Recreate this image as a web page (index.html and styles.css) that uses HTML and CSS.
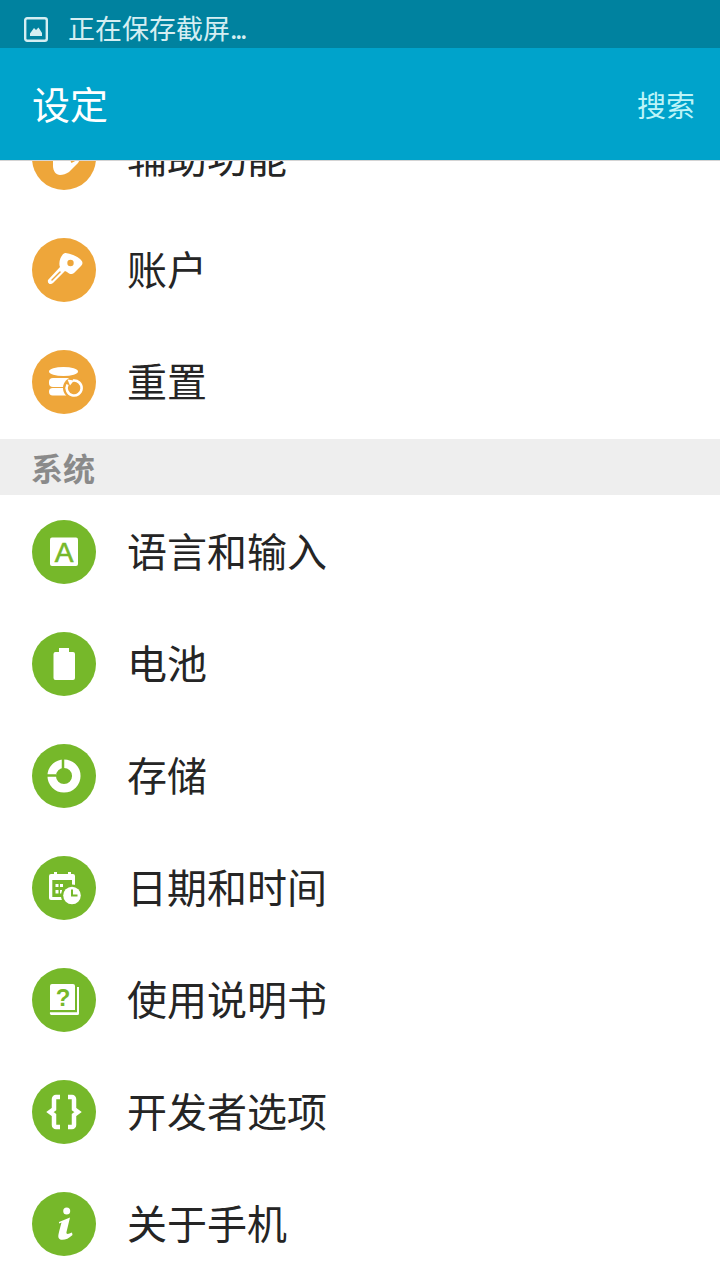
FILE: index.html
```html
<!DOCTYPE html>
<html lang="zh-CN">
<head>
    <meta charset="UTF-8">
    <meta name="viewport" content="width=device-width, initial-scale=1.0">
    <title>设定</title>
    <link rel="stylesheet" href="styles.css">
</head>
<body>
    <div class="status-bar">
        <svg class="status-icon" viewBox="0 0 24 25" width="24" height="25">
            <rect x="1.2" y="1.2" width="21.6" height="22.6" rx="2" fill="none" stroke="#d5eef2" stroke-width="2.4"/>
            <path d="M6 19v-2.500l4-5.500 2 2 2.500-2.500 3.500 5.500V19z" fill="#d5eef2"/>
        </svg>
        <span class="status-text">正在保存截屏<span class="dots">...</span></span>
    </div>
    <header class="action-bar">
        <h1>设定</h1>
        <a class="search" href="#search">搜索</a>
    </header>
    <main class="scroller">
        <ul class="list list-clipped">
            <li class="row">
                <span class="badge orange">
                    <svg viewBox="0 0 64 64"><path d="M21 30h29l-4 7-9 9c-3 2-6 3-9 3-4 0-7-4-7-9z" fill="#fff"/><path d="M39 36l6-3" stroke="#eea63a" stroke-width="2"/></svg>
                </span>
                <span class="label">辅助功能</span>
            </li>
            <li class="row">
                <span class="badge orange">
                    <svg viewBox="0 0 64 64">
                        <path d="M33 15c3 0 13 3 16 7 2 2 2 4 0 6l-7 7c-2 2-5 1-7-1l-2-1-12 12c-2 2-6 1-5-3l12-13c-2-4 1-13 5-14z" fill="#fff"/>
                        <path d="M20 42l8-8" stroke="#eea63a" stroke-width="1.500" stroke-linecap="round"/>
                        <circle cx="38.500" cy="25" r="3.200" fill="#eea63a"/>
                    </svg>
                </span>
                <span class="label">账户</span>
            </li>
            <li class="row">
                <span class="badge orange">
                    <svg viewBox="0 0 64 64">
                        <ellipse cx="31.500" cy="21.500" rx="14.500" ry="4.500" fill="#fff"/>
                        <rect x="17" y="28" width="28" height="9" rx="4" fill="#fff"/>
                        <rect x="17" y="38" width="24" height="7.500" rx="3.700" fill="#fff"/>
                        <circle cx="42" cy="38" r="11" fill="#eea63a"/>
                        <path d="M41 30.600A7.500 7.500 0 1 1 35.500 34.500" fill="none" stroke="#fff" stroke-width="2.600"/>
                        <path d="M35.500 29.500l6.500 1-4 5z" fill="#fff"/>
                    </svg>
                </span>
                <span class="label">重置</span>
            </li>
        </ul>
        <div class="section">系统</div>
        <ul class="list">
            <li class="row">
                <span class="badge green">
                    <svg viewBox="0 0 64 64">
                        <rect x="18" y="17.500" width="28" height="28.500" rx="2" fill="#fff"/>
                        <text x="32" y="42" text-anchor="middle" class="icon-a">A</text>
                    </svg>
                </span>
                <span class="label">语言和输入</span>
            </li>
            <li class="row">
                <span class="badge green">
                    <svg viewBox="0 0 64 64"><path d="M27 16h10v4h4a2 2 0 0 1 2 2v24a2 2 0 0 1-2 2H23.500a2 2 0 0 1-2-2V22a2 2 0 0 1 2-2H27z" fill="#fff"/></svg>
                </span>
                <span class="label">电池</span>
            </li>
            <li class="row">
                <span class="badge green">
                    <svg viewBox="0 0 64 64">
                        <circle cx="32" cy="32" r="12.300" fill="none" stroke="#fff" stroke-width="8.500"/>
                        <path d="M31 14v11M14 31.500h10" stroke="#76b82a" stroke-width="2.500"/>
                    </svg>
                </span>
                <span class="label">存储</span>
            </li>
            <li class="row">
                <span class="badge green">
                    <svg viewBox="0 0 64 64">
                        <path d="M22 16h3v2h11v-2h3v2h2a2 2 0 0 1 2 2v24H19a2 2 0 0 1-2-2V20a2 2 0 0 1 2-2h3z" fill="#fff"/>
                        <path d="M20.300 24h19.700v17H20.300z" fill="#76b82a"/>
                        <path d="M23.500 28h3v3h-3zM28 28h3v3h-3zM23.500 34h3v3.500h-3zM28 34h2v3.500h-2z" fill="#fff"/>
                        <circle cx="40" cy="39.500" r="11" fill="#76b82a"/>
                        <circle cx="40" cy="39.500" r="8.800" fill="#fff"/>
                        <path d="M39 33.500v7h6.500v-2h-4.500v-5z" fill="#76b82a"/>
                    </svg>
                </span>
                <span class="label">日期和时间</span>
            </li>
            <li class="row">
                <span class="badge green">
                    <svg viewBox="0 0 64 64">
                        <path d="M20 16h21a2 2 0 0 1 2 2v24H18V18a2 2 0 0 1 2-2z" fill="#fff"/>
                        <path d="M45 19h2v26.500a1.500 1.500 0 0 1-1.500 1.500H20a2 2 0 0 1-2-2.800h27z" fill="#fff"/>
                        <text x="31" y="38" text-anchor="middle" class="book-mark">?</text>
                    </svg>
                </span>
                <span class="label">使用说明书</span>
            </li>
            <li class="row">
                <span class="badge green">
                    <svg viewBox="0 0 64 64" fill="none" stroke="#fff" stroke-width="4.500">
                        <path d="M28 17h-4a2 2 0 0 0-2 2v10l-4 3 4 3v10a2 2 0 0 0 2 2h4"/>
                        <path d="M36 17h4a2 2 0 0 1 2 2v10l4 3-4 3v10a2 2 0 0 1-2 2h-4"/>
                    </svg>
                </span>
                <span class="label">开发者选项</span>
            </li>
            <li class="row">
                <span class="badge green">
                    <svg viewBox="0 0 64 64">
                        <circle cx="34.700" cy="19" r="3.500" fill="#fff"/>
                        <path d="M27 30l11-4.500-3.500 14.500c-.5 2.500 1.500 2.500 5.500.5l.5 2.500c-4.500 4.500-10.500 6-13 4-2-1.500-1-5 0-9l2-7.500-2.500 1z" fill="#fff"/>
                    </svg>
                </span>
                <span class="label">关于手机</span>
            </li>
        </ul>
    </main>
</body>
</html>
```
FILE: styles.css
```css
/* Settings list */
html, body {
    margin: 0;
    padding: 0;
    height: 1280px;
    overflow: hidden;
    background-color: #fff;
}

body {
    font-family: "Noto Sans CJK SC", "Noto Sans", sans-serif;
    display: flex;
    flex-direction: column;
}

.status-bar {
    height: 48px;
    flex: none;
    display: flex;
    align-items: center;
    padding-left: 24px;
    gap: 20px;
    background-color: #00829f;
}

.status-icon {
    flex: none;
    margin-top: 11px;
}

.status-text {
    font-size: 27px;
    line-height: 48px;
    margin-top: 7px;
    color: #d5eef2;
}

.dots {
    letter-spacing: -2.5px;
}

.action-bar {
    height: 112px;
    flex: none;
    display: flex;
    align-items: center;
    justify-content: space-between;
    padding: 0 25px 0 32px;
    background-color: #00a3cb;
    border-bottom: 1px solid #d4d4d4;
}

.action-bar h1 {
    margin: 0 0 3px;
    font-size: 38px;
    font-weight: 400;
    color: #fff;
}

.search {
    font-size: 29px;
    color: #bdf4f8;
    text-decoration: none;
}

.scroller {
    flex: 1;
    overflow: hidden;
}

.list {
    list-style: none;
    margin: 0;
    padding: 0;
}

/* list is scrolled, first row goes under the action bar */
.list-clipped {
    margin-top: -59px;
}

.row {
    height: 112px;
    display: flex;
    align-items: center;
    padding-left: 32px;
    gap: 32px;
}

.badge {
    width: 64px;
    height: 64px;
    flex: none;
    border-radius: 50%;
}

.badge svg {
    display: block;
    width: 64px;
    height: 64px;
}

.orange {
    background-color: #eea63a;
}

.green {
    background-color: #76b82a;
}

.label {
    margin: 0 0 4px -1px;
    font-size: 40px;
    color: #252525;
}

.section {
    height: 56px;
    margin: 1px 0;
    padding-left: 31px;
    font-size: 32px;
    font-weight: 700;
    line-height: 56px;
    color: #8a8a8a;
    background-color: #eeeeee;
}

.icon-a {
    font-family: "Liberation Sans", sans-serif;
    font-size: 28px;
    stroke: #76b82a;
    stroke-width: 0.6px;
    fill: #76b82a;
}

.book-mark {
    font-family: "Liberation Sans", sans-serif;
    font-size: 24px;
    font-weight: 700;
    fill: #76b82a;
}
```
